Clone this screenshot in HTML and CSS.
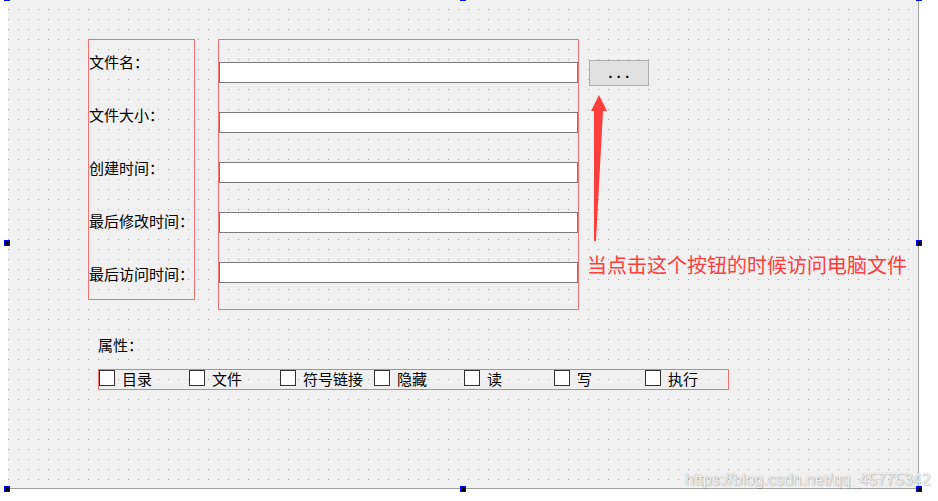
FILE: index.html
```html
<!DOCTYPE html>
<html lang="zh-CN">
<head>
    <meta charset="UTF-8">
    <title>文件属性</title>
    <link rel="stylesheet" href="styles.css">
</head>
<body>
    <div class="form">
        <div class="fields">
            <div class="label-box">
                <span class="label">文件名：</span>
                <span class="label">文件大小：</span>
                <span class="label">创建时间：</span>
                <span class="label">最后修改时间：</span>
                <span class="label">最后访问时间：</span>
            </div>
            <div class="edit-box">
                <div class="edit"></div>
                <div class="edit"></div>
                <div class="edit"></div>
                <div class="edit"></div>
                <div class="edit"></div>
            </div>
            <button class="browse">...</button>
        </div>
        <div class="attr-title">属性：</div>
        <div class="attr-box">
            <label class="check"><span class="box"></span>目录</label>
            <label class="check"><span class="box"></span>文件</label>
            <label class="check"><span class="box"></span>符号链接</label>
            <label class="check"><span class="box"></span>隐藏</label>
            <label class="check"><span class="box"></span>读</label>
            <label class="check"><span class="box"></span>写</label>
            <label class="check"><span class="box"></span>执行</label>
        </div>
    </div>

    <!-- selection handles of the designer -->
    <span class="handle h-top h-left"></span>
    <span class="handle h-top h-center"></span>
    <span class="handle h-top h-right"></span>
    <span class="handle h-mid h-left"></span>
    <span class="handle h-mid h-right"></span>
    <span class="handle h-bottom h-left"></span>
    <span class="handle h-bottom h-center"></span>
    <span class="handle h-bottom h-right"></span>

    <!-- annotation -->
    <svg class="arrow" width="20" height="150" viewBox="0 0 20 150">
        <polygon points="10,0 18,16 14,16 7,146 5,146 5,16 2,16" fill="#fe3d3d"/>
    </svg>
    <div class="note">当点击这个按钮的时候访问电脑文件</div>
    <div class="watermark">https://blog.csdn.net/qq_45775342</div>
</body>
</html>
```

FILE: styles.css
```css
:root {
    --frame: #f07272;
    --form-bg: #f0f0f0;
    --dot: #a0a0a0;
    --note: #fe3d3d;
}
body {
    margin: 0;
    background: #fff;
    position: relative;
    width: 938px;
    height: 501px;
    overflow: hidden;
    font-family: "Noto Sans CJK SC", "Noto Sans", sans-serif;
    font-size: 15px;
    color: #000;
}
.form {
    box-sizing: border-box;
    margin-left: 8px;
    width: 911px;
    height: 489px;
    padding: 39px 0 0 80px;
    border-right: 1px solid #a0a0a0;
    border-bottom: 1px solid #a0a0a0;
    background-color: var(--form-bg);
    background-image:
        linear-gradient(to bottom, transparent 1px, var(--form-bg) 1px),
        linear-gradient(to right, var(--dot) 1px, transparent 1px);
    background-size: 10px 10px;
    background-position: 0 9px;
}
.fields {
    display: flex;
    align-items: flex-start;
}
.label-box {
    box-sizing: border-box;
    width: 107px;
    height: 261px;
    padding-top: 12px;
    border: 1px solid var(--frame);
    display: flex;
    flex-direction: column;
    gap: 33px;
}
.label {
    line-height: 20px;
    white-space: nowrap;
}
.edit-box {
    box-sizing: border-box;
    margin-left: 23px;
    width: 361px;
    height: 271px;
    padding-top: 22px;
    border: 1px solid var(--frame);
    display: flex;
    flex-direction: column;
    gap: 29px;
}
.edit {
    box-sizing: border-box;
    height: 21px;
    background: #fff;
    border: 1px solid #7a7a7a;
}
.browse {
    box-sizing: border-box;
    margin: 21px 0 0 10px;
    width: 60px;
    height: 26px;
    padding: 0 0 0 4px;
    background: #e1e1e1;
    border: 1px solid #adadad;
    border-radius: 0;
    font-family: "Liberation Sans", sans-serif;
    font-size: 14px;
    font-weight: bold;
    letter-spacing: 4.5px;
    color: #000;
}
.attr-title {
    margin: 25px 0 0 10px;
    line-height: 20px;
    height: 21px;
}
.attr-box {
    box-sizing: border-box;
    margin: 13px 0 0 10px;
    width: 631px;
    height: 21px;
    border: 1px solid var(--frame);
    display: grid;
    grid-template-columns: 90px 91px 94px 90px 90px 91px 1fr;
}
.check {
    display: flex;
    align-items: flex-start;
    gap: 7px;
    line-height: 17px;
    white-space: nowrap;
}
.box {
    box-sizing: border-box;
    width: 16px;
    height: 16px;
    background: #fff;
    border: 1px solid #333;
}
.handle {
    position: absolute;
    box-sizing: border-box;
    width: 6px;
    height: 6px;
    background: #000;
    border: 1px solid #00f;
}
.h-top { top: -5px; }
.h-mid { top: 240px; }
.h-bottom { top: 486px; }
.h-left { left: 4px; }
.h-center { left: 460px; }
.h-right { left: 916px; }
.h-top.h-left, .h-top.h-center, .h-top.h-right {
    background: #00f;
}
.arrow {
    position: absolute;
    left: 589px;
    top: 95px;
}
.note {
    position: absolute;
    left: 587px;
    top: 254px;
    font-size: 20px;
    line-height: 22px;
    color: var(--note);
    white-space: nowrap;
}
.watermark {
    position: absolute;
    left: 685px;
    top: 470px;
    font-family: "Liberation Sans", Arial, sans-serif;
    font-size: 16px;
    line-height: 20px;
    color: rgba(255, 255, 255, 0.9);
    text-shadow: 0 0 1px rgba(0, 0, 0, 0.4), 1px 1px 1px rgba(0, 0, 0, 0.15);
    white-space: nowrap;
}
```
